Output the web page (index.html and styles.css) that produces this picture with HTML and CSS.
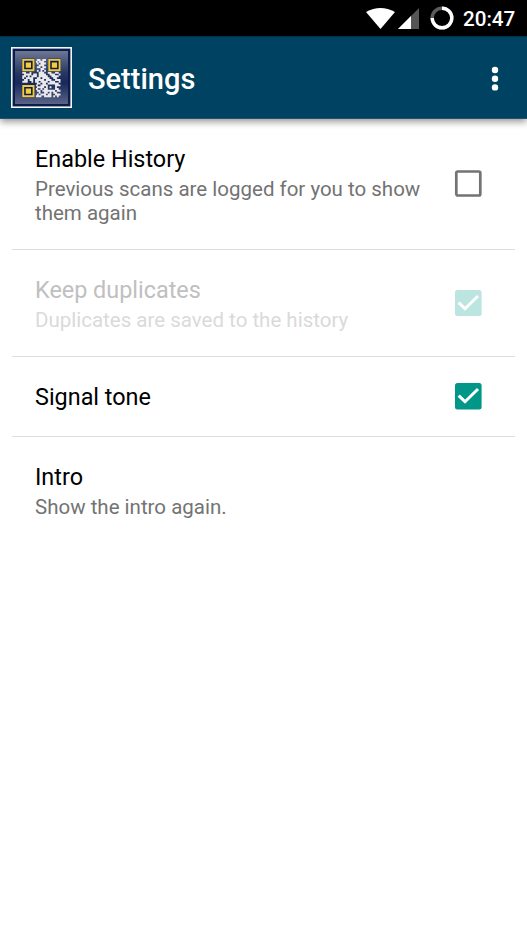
FILE: index.html
```html
<!DOCTYPE html>
<html lang="en">
<head>
<meta charset="utf-8">
<title>Settings</title>
<link rel="stylesheet" href="styles.css">
</head>
<body>
<div class="status">
  <svg class="wifi" width="29" height="21" viewBox="0 0 28 21" preserveAspectRatio="none"><path d="M0 4Q14-4 28 4L14 21Z" fill="#fff"/></svg>
  <svg class="signal" width="21" height="21" viewBox="0 0 21 21"><path d="M21 0V21H0Z" fill="#555"/><path d="M13 8V21H0Z" fill="#fff"/></svg>
  <svg class="battery" width="24" height="24" viewBox="0 0 24 24" fill="none" stroke-width="3.4"><circle cx="12" cy="12" r="9.8" stroke="#5c5c5c"/><path d="M12 2.2A9.8 9.8 0 1 1 2.2 12" stroke="#fff"/></svg>
  <span class="clock">20:47</span>
</div>
<header class="bar">
  <svg class="logo" width="61" height="61" viewBox="0 0 61 61">
    <defs><linearGradient id="g" x1="0" y1="0" x2="0" y2="1"><stop offset="0" stop-color="#707893"/><stop offset=".42" stop-color="#273762"/><stop offset=".6" stop-color="#17285a"/><stop offset="1" stop-color="#5d6588"/></linearGradient></defs>
    <rect x=".8" y=".8" width="59.4" height="59.4" fill="#0b1e50" stroke="#f4f4f6" stroke-width="1.6"/>
    <rect x="3.5" y="3.5" width="54" height="54" fill="url(#g)" stroke="#0b1c48"/>
    <g transform="translate(11.3 12) scale(1.82)">
      <path stroke="#e9e9ec" stroke-width="1.08" d="M8 .5h2M11 .5h2M7.5 1.5h1M9 1.5h3M8 2.5h1M10 2.5h3M9 3.5h3M8 4.5h2M11 4.5h2M10 5.5h2M8 6.5h1M10 6.5h1M12 6.5h1M9 7.5h3M0 7.5h2M4 7.5h1M14 7.5h2M18 7.5h2M1 8.5h4M6 8.5h2M9 8.5h4M15 8.5h3M20 8.5h1M0 9.5h2M3 9.5h1M5 9.5h3M9 9.5h5M16 9.5h4M0 10.5h1M2 10.5h4M8 10.5h2M11 10.5h4M17 10.5h2M1 11.5h2M4 11.5h2M7 11.5h5M13 11.5h3M18 11.5h3M0 12.5h3M5 12.5h1M7 12.5h2M10 12.5h4M15 12.5h3M20 12.5h1M8 13.5h2M11 13.5h2M14 13.5h6M7.5 14.5h1M10 14.5h4M18 14.5h3M8 15.5h4M13 15.5h1M15 15.5h1M18 15.5h1M7.5 16.5h1M10 16.5h1M12 16.5h2M18 16.5h2M8 17.5h2M11 17.5h7M19 17.5h2M9 18.5h1M12 18.5h2M15 18.5h1M17 18.5h2M8 19.5h1M10 19.5h3M14 19.5h2M18 19.5h3M7.5 20.5h3M12 20.5h4M17 20.5h1M19 20.5h1"/>
      <g fill="#101d4a"><path d="M-.2-.2h7.1v7.1h-7.1zM14.1-.2h7.1v7.1h-7.1zM-.2 14.1h7.1v7.1h-7.1z"/></g>
      <g fill="none" stroke="#f0c93e" stroke-width="1.05"><path d="M.5.5h5.7v5.7h-5.7zM14.8 .5h5.7v5.7h-5.7zM.5 14.8h5.7v5.7h-5.7z"/></g>
      <path fill="#f4cc3a" d="M1.9 1.9h2.9v2.9h-2.9zM16.2 1.9h2.9v2.9h-2.9zM1.9 16.2h2.9v2.9h-2.9z"/>
    </g>
  </svg>
  <h1 class="title">Settings</h1>
  <svg class="more" width="8" height="26" viewBox="0 0 8 26" fill="#fff"><circle cx="4" cy="4" r="3.2"/><circle cx="4" cy="12.7" r="3.2"/><circle cx="4" cy="21.4" r="3.2"/></svg>
</header>
<main class="list">
  <section class="row history">
    <div class="text"><div class="name">Enable History</div><div class="summary">Previous scans are logged for you to show<br>them again</div></div>
    <svg class="check" width="28" height="28" viewBox="0 0 28 28"><rect x="2.3" y="2.5" width="24" height="24" rx="1.5" fill="none" stroke="#737373" stroke-width="2.7"/></svg>
  </section>
  <section class="row duplicates">
    <div class="text"><div class="name">Keep duplicates</div><div class="summary">Duplicates are saved to the history</div></div>
    <svg class="check" width="28" height="28" viewBox="0 0 28 28"><rect x="1" y="1" width="26.6" height="26" rx="2.5" fill="#bce4e0"/><path d="M4.7 13.7l6.3 6L24 7" fill="none" stroke="#fff" stroke-width="3"/></svg>
  </section>
  <section class="row tone">
    <div class="text"><div class="name">Signal tone</div></div>
    <svg class="check" width="28" height="28" viewBox="0 0 28 28"><rect x="1" y="1" width="26.6" height="26.4" rx="2.5" fill="#009688"/><path d="M4.7 13.7l6.3 6L24 7" fill="none" stroke="#fff" stroke-width="3"/></svg>
  </section>
  <section class="row intro">
    <div class="text"><div class="name">Intro</div><div class="summary">Show the intro again.</div></div>
  </section>
</main>
</body>
</html>
```
FILE: styles.css
```css
* { box-sizing: border-box; }
body { margin: 0; height: 937px; background: #fff; font-family: Roboto, sans-serif; overflow: hidden; }
svg { display: block; flex: none; }
.status { height: 36px; background: #000; color: #fff; display: flex; align-items: flex-start; padding: 6px 12px 0 0; justify-content: flex-end; }
.wifi { margin-top: 2px; }
.signal { margin: 2px 11px 0 3px; }
.clock { margin-left: 9px; width: 52px; font-size: 20.6px; line-height: 27px; font-weight: 500; white-space: nowrap; }
.bar { height: 83px; background: #004262; border-top: 1px solid #00304a; border-bottom: 1px solid #24536c; color: #fff; display: flex; align-items: center; padding: 0 28px 0 11px; box-shadow: 0 3px 7px rgba(0, 0, 0, .4); }
.title { margin: 3px 0 0 16px; flex: 1; font-size: 29px; line-height: 34px; font-weight: 500; }
.more { margin-top: 2px; }
.list { padding: 0 12px; }
.row { display: flex; padding: 0 33px 0 23px; border-bottom: 1px solid #dedede; }
.text { flex: 1; white-space: nowrap; }
.name { font-size: 23.4px; line-height: 30px; color: #000; }
.summary { font-size: 20.5px; line-height: 24px; padding-top: 3px; color: #737373; }
.history { height: 131px; padding-top: 25px; }
.history .check { margin-top: 25px; }
.duplicates { height: 107px; padding-top: 25px; }
.duplicates .name { color: #c0c0c0; }
.duplicates .summary { color: #dadada; }
.duplicates .check { margin-top: 14px; }
.tone { height: 80px; padding-top: 25px; }
.tone .check { margin-top: 0; }
.intro { border: 0; padding-top: 25px; }
```
